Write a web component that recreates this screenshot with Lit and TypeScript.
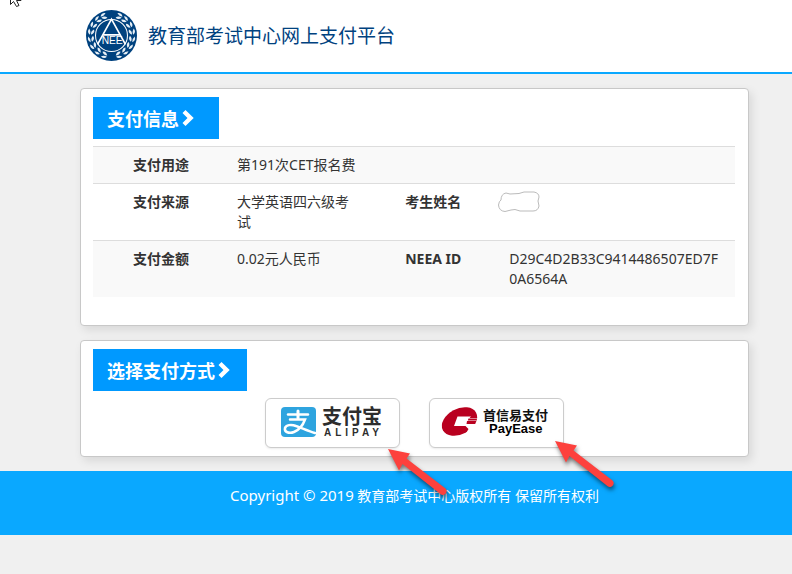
import { LitElement, html, css, svg } from "lit";
import { customElement } from "lit/decorators.js";

const chevron = html`<svg class="chevron" viewBox="0 0 12 16" aria-hidden="true">
  <path d="M3.500 0 L0.500 3 L5.500 8 L0.500 13 L3.500 16 L11.700 8 Z" fill="#fff" />
</svg>`;

const arrow = html`<svg class="arrow" viewBox="0 0 66 58" aria-hidden="true">
  <path
    d="M0 0 L22 4.500 L18.500 9.500 L57.500 39.500 A3.800 3.800 0 0 1 53 45.500 L14.500 15 L11 21.500 Z"
    fill="#fd413d"
  />
</svg>`;

/* Leaf pairs of the laurel wreath, from the foot of the emblem up each side. */
const leafAngles = [12, 32, 52, 72, 92, 112, 132, 150];
const wreathSide = (side: number) =>
  leafAngles.map(
    (a) => svg`<g transform=${`rotate(${-side * a} 75 75) translate(75 136)`}>
      <path d=${`M0 3 Q${side * 7} 13 ${side * 18} 5 Q${side * 8} -1 0 3Z`} />
      <path d=${`M0 -1 Q${side * 6} -13 ${side * 16} -9 Q${side * 11} 1 0 -1Z`} />
    </g>`
  );

const emblem = html`<svg class="emblem" viewBox="0 0 150 150" role="img" aria-label="NEEA">
  <circle cx="75" cy="75" r="75" fill="#00427f" />
  <g fill="#e6eff6">${wreathSide(1)}${wreathSide(-1)}</g>
  <circle cx="75" cy="75" r="47" fill="#00427f" stroke="#fff" stroke-width="3" />
  <path
    d="M34 101 L75 27 L116 101 M50 73 H100"
    fill="none"
    stroke="#fff"
    stroke-width="5"
  />
  <text class="emblem-text" x="77" y="101" text-anchor="middle">NEE</text>
</svg>`;

const alipayLogo = html`<svg class="pay-logo" viewBox="0 0 133 48" aria-hidden="true">
  <rect x="15" y="8" width="35" height="30" rx="4" fill="#2ea4df" />
  <g fill="none" stroke="#fff" stroke-linecap="round">
    <path d="M32 12 V19" stroke-width="3" />
    <path d="M22 15.500 H42" stroke-width="2.400" />
    <path
      d="M24 20.500 H39 C37 26 33 31 28 33 C23 35 18 33 19 29 C20 26 25 25 30 27 C36 29 42 32 49 34"
      stroke-width="2.500"
    />
  </g>
  <text class="alipay-cn" x="56" y="25">支付宝</text>
  <text class="alipay-en" x="58" y="37">ALIPAY</text>
</svg>`;

const payeaseLogo = html`<svg class="pay-logo" viewBox="0 0 133 48" aria-hidden="true">
  <ellipse cx="29.500" cy="22.500" rx="18.800" ry="12.800" transform="rotate(-28 29.5 22.5)" fill="#b9001f" />
  <path
    d="M27.500 17.500 H41 L39.500 19 H48.500 L48 19.500 H38.500 L37.800 21.500 H47 L46 22 H37 L36.500 25 H50 L48 38 H34 L38.500 30 L35.500 27 H24 Z"
    fill="#fff"
  />
  <text class="payease-cn" x="53" y="21">首信易支付</text>
  <text class="payease-en" x="59" y="34">PayEase</text>
</svg>`;

@customElement("app-root")
export class AppRoot extends LitElement {
  static styles = css`
    :host {
      display: block;
      min-height: 100vh;
      background: #f0f0f0;
      color: #333;
      font: 14px/20px "Noto Sans", "Noto Sans CJK SC", sans-serif;
    }
    header {
      position: relative;
      display: flex;
      align-items: center;
      gap: 11px;
      box-sizing: border-box;
      height: 74px;
      padding: 0 44px 2px 86px;
      background: #fff;
      border-bottom: 2px solid #0aa8ff;
    }
    .emblem {
      width: 51px;
      height: 51px;
    }
    .emblem-text {
      font: 30px "Liberation Sans", sans-serif;
      fill: #fff;
    }
    h1 {
      margin: 0;
      color: #00427f;
      font: 400 19px/28px "Noto Sans CJK SC", sans-serif;
    }
    .pointer {
      position: absolute;
      left: 8px;
      top: 0;
      width: 16px;
      height: 8px;
    }
    main {
      display: flex;
      flex-direction: column;
      gap: 14px;
      padding: 14px 43px 14px 80px;
    }
    .card {
      padding: 8px 13px 8px 12px;
      background: #fff;
      border: 1px solid #c8c8c8;
      border-radius: 4px;
      box-shadow: 3px 4px 10px rgba(0, 0, 0, 0.1);
    }
    .info {
      padding-bottom: 28px;
    }
    h2 {
      display: flex;
      align-items: center;
      gap: 3px;
      width: fit-content;
      box-sizing: border-box;
      height: 42px;
      margin: 0 0 7px;
      padding: 0 25px 0 14px;
      background: #0099ff;
      color: #fff;
      font: 700 18px/42px "Noto Sans CJK SC", sans-serif;
    }
    .pay h2 {
      padding-right: 17px;
    }
    .chevron {
      width: 12px;
      height: 16px;
    }
    table {
      width: 100%;
      border-collapse: collapse;
      table-layout: fixed;
    }
    th,
    td {
      padding: 8px;
      border-top: 1px solid #ddd;
      vertical-align: top;
      text-align: left;
      overflow-wrap: anywhere;
    }
    th {
      text-align: center;
      font-weight: 700;
    }
    td:last-child {
      padding-right: 12px;
    }
    tr:nth-child(odd) {
      background: #f9f9f9;
    }
    .label-col,
    .value-col {
      width: 21.2%;
    }
    .masked {
      position: relative;
    }
    .mask {
      position: absolute;
      left: -4px;
      top: 7px;
      width: 44px;
      height: 22px;
    }
    .methods {
      display: flex;
      justify-content: center;
      gap: 29px;
    }
    .method {
      position: relative;
    }
    button {
      display: block;
      width: 135px;
      height: 50px;
      padding: 0;
      background: #fff;
      border: 1px solid #ccc;
      border-radius: 6px;
      box-shadow: 0 1px 2px rgba(0, 0, 0, 0.08);
      cursor: pointer;
    }
    .pay-logo {
      display: block;
      width: 133px;
      height: 48px;
    }
    .alipay-cn {
      font: 700 20px "Noto Sans CJK SC", sans-serif;
      fill: #2d2d2d;
    }
    .alipay-en {
      font: 700 10px "Liberation Sans", sans-serif;
      letter-spacing: 4px;
      fill: #2d2d2d;
    }
    .payease-cn {
      font: 700 13px "Noto Sans CJK SC", sans-serif;
      fill: #111;
    }
    .payease-en {
      font: 700 13px "Liberation Sans", sans-serif;
      fill: #000;
    }
    .arrow {
      position: absolute;
      left: 123px;
      top: 51px;
      z-index: 1;
      width: 66px;
      height: 58px;
      overflow: visible;
      pointer-events: none;
      filter: drop-shadow(1px 3px 2px rgba(0, 0, 0, 0.5));
    }
    .method + .method .arrow {
      left: 126px;
      top: 43px;
    }
    footer {
      box-sizing: border-box;
      height: 64px;
      padding: 14px 43px 0 80px;
      background: #0aa8ff;
      color: #fff;
      text-align: center;
    }
    footer p {
      margin: 0;
    }
    .latin {
      font-size: 15px;
    }
  `;

  render() {
    return html`
      <header>
        ${emblem}
        <h1>教育部考试中心网上支付平台</h1>
        <svg class="pointer" viewBox="0 0 16 8" aria-hidden="true">
          <path
            d="M2.500 -8 V4.500 L5.500 1.500 L8.500 6.500 L11 5.500 L8.500 0.500 H13 L2.500 -10"
            fill="#fff"
            stroke="#222"
          />
        </svg>
      </header>
      <main>
        <section class="card info">
          <h2>支付信息${chevron}</h2>
          <table>
            <colgroup>
              <col class="label-col" />
              <col class="value-col" />
              <col class="label-col" />
              <col />
            </colgroup>
            <tbody>
              <tr>
                <th scope="row">支付用途</th>
                <td colspan="3">第191次CET报名费</td>
              </tr>
              <tr>
                <th scope="row">支付来源</th>
                <td>大学英语四六级考试</td>
                <th scope="row">考生姓名</th>
                <td class="masked">
                  <svg class="mask" viewBox="0 0 44 22" aria-hidden="true">
                    <path
                      d="M4 9 Q4 3 9 2 L13 3 L22 2.500 L27 1 H37 Q42 2 42 6 L41 10 L42 15 Q41 20 36 20 H23 L18 18.500 L14 19 L8 20.500 Q2 20 1.500 14 Q2 10 4 9Z"
                      fill="#fff"
                      stroke="#bbb"
                    />
                  </svg>
                </td>
              </tr>
              <tr>
                <th scope="row">支付金额</th>
                <td>0.02元人民币</td>
                <th scope="row">NEEA ID</th>
                <td>D29C4D2B33C9414486507ED7F0A6564A</td>
              </tr>
            </tbody>
          </table>
        </section>
        <section class="card pay">
          <h2>选择支付方式${chevron}</h2>
          <div class="methods">
            <div class="method">
              <button type="button" aria-label="支付宝 ALIPAY">${alipayLogo}</button>
              ${arrow}
            </div>
            <div class="method">
              <button type="button" aria-label="首信易支付 PayEase">${payeaseLogo}</button>
              ${arrow}
            </div>
          </div>
        </section>
      </main>
      <footer>
        <p><span class="latin">Copyright © 2019</span> 教育部考试中心版权所有 保留所有权利</p>
      </footer>
    `;
  }
}
